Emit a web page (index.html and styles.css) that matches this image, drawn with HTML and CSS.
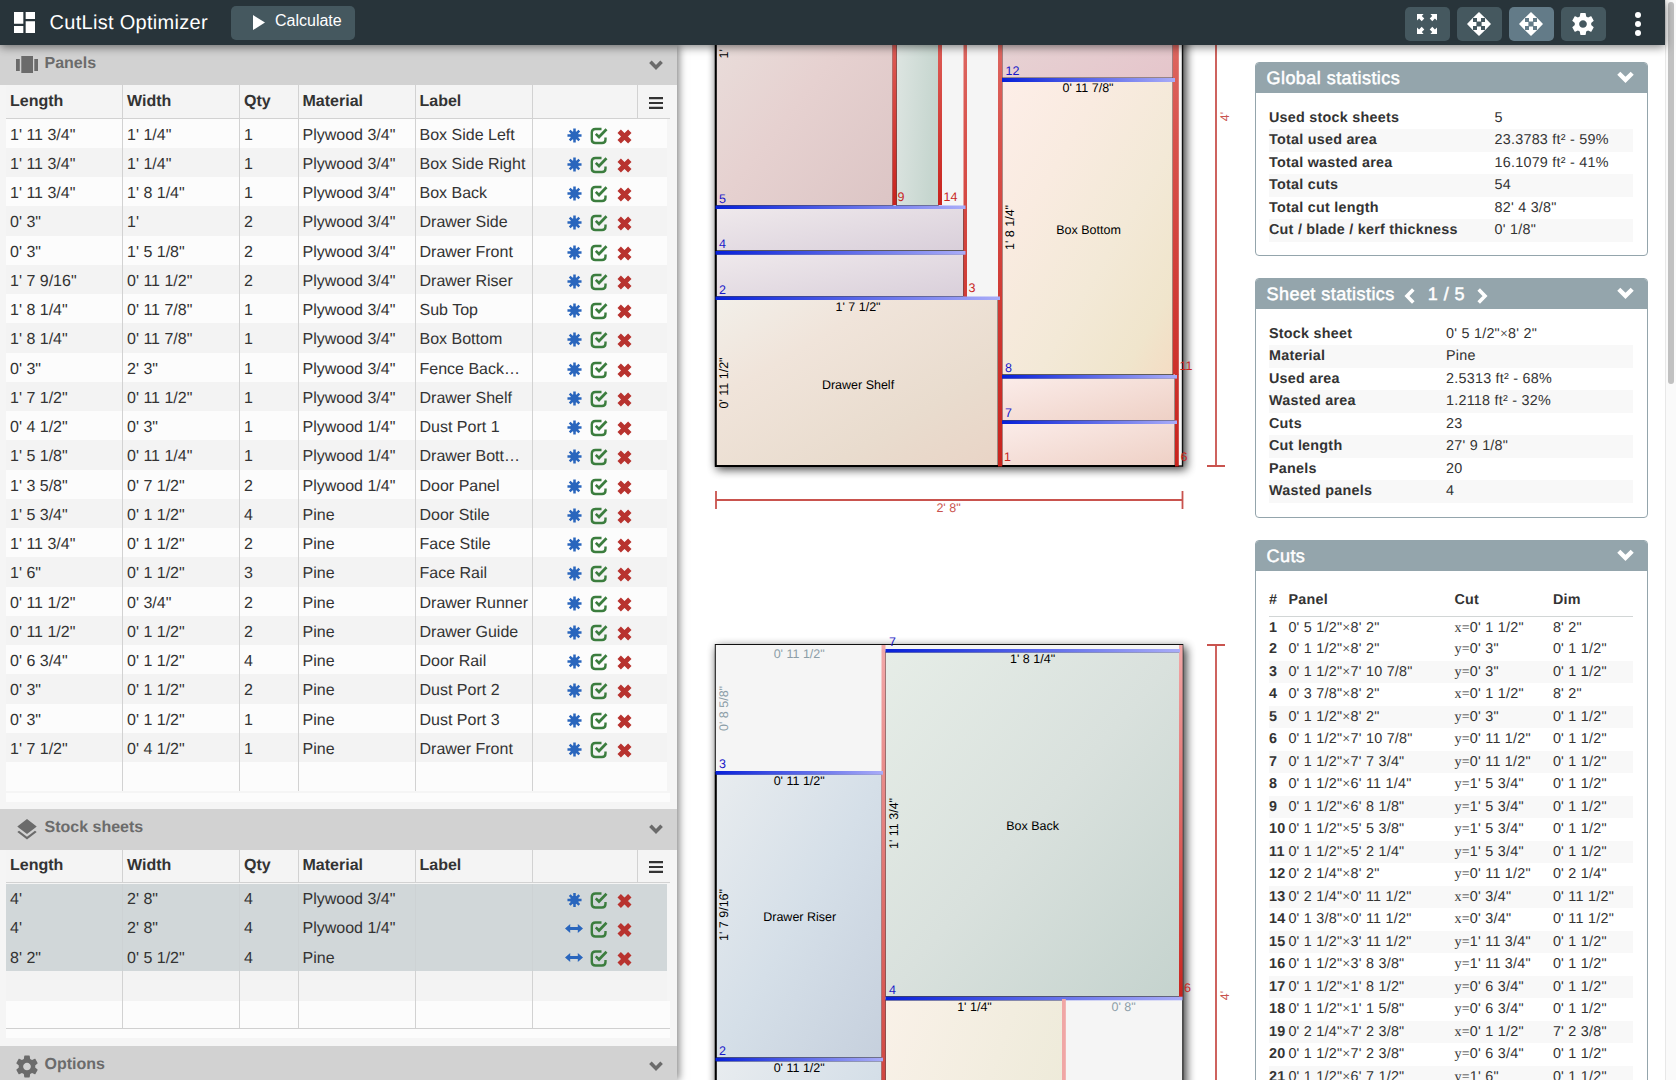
FILE: index.html
```html
<!DOCTYPE html>
<html lang="en">
<head>
<meta charset="utf-8">
<title>CutList Optimizer</title>
<link rel="stylesheet" href="styles.css">
</head>
<body>
<svg class="defs" width="0" height="0">
  <defs>
    <symbol id="star" viewBox="0 0 16 16"><path d="M8 .5v15M.5 8h15M2.9 2.9l10.2 10.2M13.1 2.9L2.9 13.1" stroke="#2a66bd" stroke-width="2.7" fill="none"/><circle cx="8" cy="8" r="4.6" fill="#2a66bd"/></symbol>
    <symbol id="both" viewBox="0 0 18 10"><path d="M0 5L5.200.6V3.500H12.800V.600L18 5L12.800 9.400V6.500H5.200V9.400Z" fill="#2a66bd"/></symbol>
    <symbol id="check" viewBox="0 0 18 18"><path d="M11.500 2H5.500Q1.800 2 1.800 5.500V12.500Q1.800 16 5.500 16H12Q15.500 16 15.500 12.500V10.500" stroke="#3b7d3e" stroke-width="2.400" fill="none"/><path d="M5.800 6.900L9 10L16.500 2.300" stroke="#3b7d3e" stroke-width="2.700" fill="none"/></symbol>
    <symbol id="cross" viewBox="0 0 15 15"><path d="M2.200 2.200L12.800 12.800M12.800 2.200L2.200 12.800" stroke="#b8332f" stroke-width="4.800" fill="none"/></symbol>
    <symbol id="chev" viewBox="0 0 14 10"><path d="M1.400 1.800L7 7.400L12.600 1.800" stroke="currentColor" stroke-width="3.600" fill="none"/></symbol>
    <symbol id="bars" viewBox="0 0 14 12"><path d="M0 1.100H14M0 6H14M0 10.900H14" stroke="#333" stroke-width="2.200"/></symbol>
    <symbol id="gear" viewBox="2 2 20 20"><path fill="currentColor" d="M19.430 12.980c.040-.320.070-.640.070-.980s-.030-.660-.070-.980l2.110-1.650c.190-.150.240-.420.120-.640l-2-3.460c-.120-.220-.390-.300-.610-.220l-2.490 1c-.520-.400-1.080-.730-1.690-.980l-.380-2.650C14.460 2.180 14.250 2 14 2h-4c-.250 0-.460.180-.490.420l-.380 2.650c-.610.250-1.170.590-1.690.980l-2.490-1c-.230-.090-.490 0-.610.220l-2 3.460c-.130.220-.070.490.120.640l2.110 1.650c-.040.320-.070.650-.070.980s.030.660.070.980l-2.110 1.650c-.190.150-.240.420-.120.640l2 3.460c.120.220.390.300.610.220l2.490-1c.520.400 1.080.730 1.690.980l.380 2.650c.030.240.240.420.490.420h4c.250 0 .460-.180.490-.420l.380-2.650c.610-.250 1.170-.590 1.690-.980l2.490 1c.230.090.490 0 .610-.220l2-3.460c.120-.220.070-.490-.120-.640l-2.110-1.650zM12 15.500c-1.930 0-3.500-1.570-3.500-3.500s1.570-3.500 3.500-3.500 3.500 1.570 3.500 3.500-1.570 3.500-3.500 3.500z"/></symbol>
    <symbol id="move" viewBox="0 0 24 24"><path fill="#fff" d="M12 0l6.200 6H14v3.400h-4V6H5.800zM12 24l-6.200-6H10v-3.400h4V18h4.200zM0 12l6-6.200V10h3.400v4H6v4.200zM24 12l-6 6.200V14h-3.400v-4H18V5.800z"/></symbol>
    <symbol id="expand" viewBox="0 0 20 20"><path fill="#fff" d="M0 0h6.600L4.800 1.900 7.300 4.500 4.700 7.200 2.100 4.600 0 6.600zM20 0v6.600L17.900 4.600l-2.600 2.600-2.600-2.700 2.500-2.600L13.400 0zM0 20v-6.600l2.100 2 2.600-2.600 2.600 2.700-2.500 2.600L6.600 20zM20 20h-6.600l1.800-1.900-2.500-2.600 2.600-2.700 2.600 2.600 2.100-2z"/></symbol>
  </defs>
</svg>
<div class="page">
<header class="topbar">
  <svg class="logo" width="21" height="21" viewBox="0 0 18 18"><path fill="#fff" d="M0 10h8V0H0zM0 18h8v-6H0zM10 18h8V8h-8zM10 0v6h8V0z"/></svg>
  <span class="brand">CutList Optimizer</span>
  <button class="calc"><svg width="12" height="15" viewBox="0 0 12 15"><path d="M0 0L12 7.500L0 15Z" fill="#fff"/></svg>Calculate</button>
  <div class="tools">
    <button class="tool"><svg width="20" height="20"><use href="#expand"/></svg></button>
    <button class="tool"><svg width="24" height="24"><use href="#move"/></svg></button>
    <button class="tool active"><svg width="24" height="24"><use href="#move"/></svg></button>
    <button class="tool"><svg width="22" height="22"><use href="#gear"/></svg></button>
    <svg class="dots" width="6" height="24" viewBox="0 0 6 24"><circle cx="3" cy="3" r="3" fill="#fff"/><circle cx="3" cy="12" r="3" fill="#fff"/><circle cx="3" cy="21" r="3" fill="#fff"/></svg>
  </div>
</header>
<div class="main">
<aside class="side">
  <h2 class="bar first"><svg width="22" height="17" viewBox="0 0 22 17"><path fill="#6b6b6b" d="M0 3h3.800v12H0zM5.300 0h11.700v17H5.300zM18.300 3H22v12h-3.700z"/></svg>Panels<svg class="fold" width="14" height="10"><use href="#chev"/></svg></h2>
  <div class="grid">
    <div class="row head"><b>Length</b><b>Width</b><b>Qty</b><b>Material</b><b>Label</b><b></b><b class="menu"><svg width="14" height="12"><use href="#bars"/></svg></b></div>
    <div class="row"><span>1' 11 3/4"</span><span>1' 1/4"</span><span>1</span><span>Plywood 3/4"</span><span>Box Side Left</span><span class="act"><svg class="i1"><use href="#star"/></svg><svg class="i2"><use href="#check"/></svg><svg class="i3"><use href="#cross"/></svg></span></div>
    <div class="row"><span>1' 11 3/4"</span><span>1' 1/4"</span><span>1</span><span>Plywood 3/4"</span><span>Box Side Right</span><span class="act"><svg class="i1"><use href="#star"/></svg><svg class="i2"><use href="#check"/></svg><svg class="i3"><use href="#cross"/></svg></span></div>
    <div class="row"><span>1' 11 3/4"</span><span>1' 8 1/4"</span><span>1</span><span>Plywood 3/4"</span><span>Box Back</span><span class="act"><svg class="i1"><use href="#star"/></svg><svg class="i2"><use href="#check"/></svg><svg class="i3"><use href="#cross"/></svg></span></div>
    <div class="row"><span>0' 3"</span><span>1'</span><span>2</span><span>Plywood 3/4"</span><span>Drawer Side</span><span class="act"><svg class="i1"><use href="#star"/></svg><svg class="i2"><use href="#check"/></svg><svg class="i3"><use href="#cross"/></svg></span></div>
    <div class="row"><span>0' 3"</span><span>1' 5 1/8"</span><span>2</span><span>Plywood 3/4"</span><span>Drawer Front</span><span class="act"><svg class="i1"><use href="#star"/></svg><svg class="i2"><use href="#check"/></svg><svg class="i3"><use href="#cross"/></svg></span></div>
    <div class="row"><span>1' 7 9/16"</span><span>0' 11 1/2"</span><span>2</span><span>Plywood 3/4"</span><span>Drawer Riser</span><span class="act"><svg class="i1"><use href="#star"/></svg><svg class="i2"><use href="#check"/></svg><svg class="i3"><use href="#cross"/></svg></span></div>
    <div class="row"><span>1' 8 1/4"</span><span>0' 11 7/8"</span><span>1</span><span>Plywood 3/4"</span><span>Sub Top</span><span class="act"><svg class="i1"><use href="#star"/></svg><svg class="i2"><use href="#check"/></svg><svg class="i3"><use href="#cross"/></svg></span></div>
    <div class="row"><span>1' 8 1/4"</span><span>0' 11 7/8"</span><span>1</span><span>Plywood 3/4"</span><span>Box Bottom</span><span class="act"><svg class="i1"><use href="#star"/></svg><svg class="i2"><use href="#check"/></svg><svg class="i3"><use href="#cross"/></svg></span></div>
    <div class="row"><span>0' 3"</span><span>2' 3"</span><span>1</span><span>Plywood 3/4"</span><span>Fence Back…</span><span class="act"><svg class="i1"><use href="#star"/></svg><svg class="i2"><use href="#check"/></svg><svg class="i3"><use href="#cross"/></svg></span></div>
    <div class="row"><span>1' 7 1/2"</span><span>0' 11 1/2"</span><span>1</span><span>Plywood 3/4"</span><span>Drawer Shelf</span><span class="act"><svg class="i1"><use href="#star"/></svg><svg class="i2"><use href="#check"/></svg><svg class="i3"><use href="#cross"/></svg></span></div>
    <div class="row"><span>0' 4 1/2"</span><span>0' 3"</span><span>1</span><span>Plywood 1/4"</span><span>Dust Port 1</span><span class="act"><svg class="i1"><use href="#star"/></svg><svg class="i2"><use href="#check"/></svg><svg class="i3"><use href="#cross"/></svg></span></div>
    <div class="row"><span>1' 5 1/8"</span><span>0' 11 1/4"</span><span>1</span><span>Plywood 1/4"</span><span>Drawer Bott…</span><span class="act"><svg class="i1"><use href="#star"/></svg><svg class="i2"><use href="#check"/></svg><svg class="i3"><use href="#cross"/></svg></span></div>
    <div class="row"><span>1' 3 5/8"</span><span>0' 7 1/2"</span><span>2</span><span>Plywood 1/4"</span><span>Door Panel</span><span class="act"><svg class="i1"><use href="#star"/></svg><svg class="i2"><use href="#check"/></svg><svg class="i3"><use href="#cross"/></svg></span></div>
    <div class="row"><span>1' 5 3/4"</span><span>0' 1 1/2"</span><span>4</span><span>Pine</span><span>Door Stile</span><span class="act"><svg class="i1"><use href="#star"/></svg><svg class="i2"><use href="#check"/></svg><svg class="i3"><use href="#cross"/></svg></span></div>
    <div class="row"><span>1' 11 3/4"</span><span>0' 1 1/2"</span><span>2</span><span>Pine</span><span>Face Stile</span><span class="act"><svg class="i1"><use href="#star"/></svg><svg class="i2"><use href="#check"/></svg><svg class="i3"><use href="#cross"/></svg></span></div>
    <div class="row"><span>1' 6"</span><span>0' 1 1/2"</span><span>3</span><span>Pine</span><span>Face Rail</span><span class="act"><svg class="i1"><use href="#star"/></svg><svg class="i2"><use href="#check"/></svg><svg class="i3"><use href="#cross"/></svg></span></div>
    <div class="row"><span>0' 11 1/2"</span><span>0' 3/4"</span><span>2</span><span>Pine</span><span>Drawer Runner</span><span class="act"><svg class="i1"><use href="#star"/></svg><svg class="i2"><use href="#check"/></svg><svg class="i3"><use href="#cross"/></svg></span></div>
    <div class="row"><span>0' 11 1/2"</span><span>0' 1 1/2"</span><span>2</span><span>Pine</span><span>Drawer Guide</span><span class="act"><svg class="i1"><use href="#star"/></svg><svg class="i2"><use href="#check"/></svg><svg class="i3"><use href="#cross"/></svg></span></div>
    <div class="row"><span>0' 6 3/4"</span><span>0' 1 1/2"</span><span>4</span><span>Pine</span><span>Door Rail</span><span class="act"><svg class="i1"><use href="#star"/></svg><svg class="i2"><use href="#check"/></svg><svg class="i3"><use href="#cross"/></svg></span></div>
    <div class="row"><span>0' 3"</span><span>0' 1 1/2"</span><span>2</span><span>Pine</span><span>Dust Port 2</span><span class="act"><svg class="i1"><use href="#star"/></svg><svg class="i2"><use href="#check"/></svg><svg class="i3"><use href="#cross"/></svg></span></div>
    <div class="row"><span>0' 3"</span><span>0' 1 1/2"</span><span>1</span><span>Pine</span><span>Dust Port 3</span><span class="act"><svg class="i1"><use href="#star"/></svg><svg class="i2"><use href="#check"/></svg><svg class="i3"><use href="#cross"/></svg></span></div>
    <div class="row"><span>1' 7 1/2"</span><span>0' 4 1/2"</span><span>1</span><span>Pine</span><span>Drawer Front</span><span class="act"><svg class="i1"><use href="#star"/></svg><svg class="i2"><use href="#check"/></svg><svg class="i3"><use href="#cross"/></svg></span></div>
    <div class="row"><span></span><span></span><span></span><span></span><span></span><span></span></div>
    <div class="foot"></div>
  </div>
  <h2 class="bar"><svg width="20" height="21" viewBox="2.500 2 19 19.500"><path fill="#6b6b6b" d="M11.990 18.540l-7.370-5.730L3 14.070l9 7 9-7-1.630-1.270-7.380 5.740zM12 16l7.360-5.730L21 9l-9-7-9 7 1.630 1.270L12 16z"/></svg>Stock sheets<svg class="fold" width="14" height="10"><use href="#chev"/></svg></h2>
  <div class="grid stock">
    <div class="row head"><b>Length</b><b>Width</b><b>Qty</b><b>Material</b><b>Label</b><b></b><b class="menu"><svg width="14" height="12"><use href="#bars"/></svg></b></div>
    <div class="row sel"><span>4'</span><span>2' 8"</span><span>4</span><span>Plywood 3/4"</span><span></span><span class="act"><svg class="i1"><use href="#star"/></svg><svg class="i2"><use href="#check"/></svg><svg class="i3"><use href="#cross"/></svg></span></div>
    <div class="row sel"><span>4'</span><span>2' 8"</span><span>4</span><span>Plywood 1/4"</span><span></span><span class="act"><svg class="i1 wide"><use href="#both"/></svg><svg class="i2"><use href="#check"/></svg><svg class="i3"><use href="#cross"/></svg></span></div>
    <div class="row sel"><span>8' 2"</span><span>0' 5 1/2"</span><span>4</span><span>Pine</span><span></span><span class="act"><svg class="i1 wide"><use href="#both"/></svg><svg class="i2"><use href="#check"/></svg><svg class="i3"><use href="#cross"/></svg></span></div>
    <div class="row"><span></span><span></span><span></span><span></span><span></span><span></span></div>
    <div class="row last"><span></span><span></span><span></span><span></span><span></span><span></span></div>
    <div class="foot"></div>
  </div>
  <h2 class="bar end"><svg width="22" height="23"><use href="#gear"/></svg>Options<svg class="fold" width="14" height="10"><use href="#chev"/></svg></h2>
</aside>
<section class="board">
<svg class="sheets" width="564" height="1035" viewBox="677 45 564 1035">
  <defs>
    <linearGradient id="bl" x1="0" x2="1" y1="0" y2="0"><stop offset="0" stop-color="#0720d8"/><stop offset="1" stop-color="#a9acf8"/></linearGradient>
    <linearGradient id="r1" gradientUnits="userSpaceOnUse" x1="0" x2="0" y1="0" y2="466"><stop offset="0" stop-color="#e0706a"/><stop offset=".3" stop-color="#d8524c"/><stop offset="1" stop-color="#c8231d"/></linearGradient>
    <linearGradient id="r2" gradientUnits="userSpaceOnUse" x1="0" x2="0" y1="45" y2="205"><stop offset="0" stop-color="#dd5b55"/><stop offset="1" stop-color="#c8231d"/></linearGradient>
    <linearGradient id="r3" gradientUnits="userSpaceOnUse" x1="0" x2="0" y1="645" y2="1130"><stop offset="0" stop-color="#f2a9a9"/><stop offset="1" stop-color="#cc3a34"/></linearGradient>
    <linearGradient id="r4" gradientUnits="userSpaceOnUse" x1="0" x2="0" y1="645" y2="997"><stop offset="0" stop-color="#f2a9a9"/><stop offset="1" stop-color="#c8231d"/></linearGradient>
    <linearGradient id="rose" x1="0" x2="1" y1="0" y2="1"><stop offset="0" stop-color="#eae1de"/><stop offset=".5" stop-color="#e6d1d0"/><stop offset="1" stop-color="#dcc5c5"/></linearGradient>
    <linearGradient id="green" x1="0" x2="1" y1="0" y2=".3"><stop offset="0" stop-color="#dfe6e3"/><stop offset="1" stop-color="#c6d6cf"/></linearGradient>
    <linearGradient id="mauve" x1="0" x2="1" y1="0" y2="1"><stop offset="0" stop-color="#efe9ec"/><stop offset="1" stop-color="#d9cfda"/></linearGradient>
    <linearGradient id="shelf" x1="0" x2="1" y1="0" y2="1"><stop offset="0" stop-color="#f2efe9"/><stop offset=".3" stop-color="#f0e4da"/><stop offset=".7" stop-color="#e9dcce"/><stop offset="1" stop-color="#e9d4c6"/></linearGradient>
    <linearGradient id="pink" x1="0" x2="1" y1="0" y2="1"><stop offset="0" stop-color="#e8d9d8"/><stop offset="1" stop-color="#e5c5cb"/></linearGradient>
    <linearGradient id="sand" x1="0" x2="1" y1="0" y2="1"><stop offset="0" stop-color="#fdeee8"/><stop offset=".3" stop-color="#f9ebe0"/><stop offset=".6" stop-color="#f3e9d7"/><stop offset=".85" stop-color="#f0e5cc"/><stop offset="1" stop-color="#f4dcc3"/></linearGradient>
    <linearGradient id="peach" x1="0" x2="1" y1="0" y2="1"><stop offset="0" stop-color="#fbece9"/><stop offset="1" stop-color="#eed0c5"/></linearGradient>
    <linearGradient id="ice" x1="0" x2="1" y1="0" y2="1"><stop offset="0" stop-color="#e8ecef"/><stop offset=".5" stop-color="#d5dfe8"/><stop offset="1" stop-color="#c6d0dd"/></linearGradient>
    <linearGradient id="sage" x1="0" x2="1" y1="0" y2="1"><stop offset="0" stop-color="#e6ede7"/><stop offset=".5" stop-color="#d9e1dd"/><stop offset="1" stop-color="#c5d3ce"/></linearGradient>
    <linearGradient id="cream" x1="0" x2="1" y1="0" y2=".7"><stop offset="0" stop-color="#f9f1e8"/><stop offset="1" stop-color="#ebe9d6"/></linearGradient>
    <filter id="sh" x="-10%" y="-10%" width="120%" height="120%"><feGaussianBlur stdDeviation="5"/></filter>
  </defs>

  <rect x="716.500" y="-20" width="470" height="489.500" fill="#000" opacity=".75" filter="url(#sh)"/>
  <rect x="715.500" y="-20" width="467" height="486" fill="#f5f5f5" stroke="#111" stroke-width="1.400"/>
  <g stroke="#222" stroke-width=".8">
    <rect x="716" y="-20" width="177" height="225.500" fill="url(#rose)"/>
    <rect x="896.500" y="-20" width="42" height="225.500" fill="url(#green)"/>
    <rect x="716" y="208" width="247.500" height="42.700" fill="url(#mauve)"/>
    <rect x="716" y="254" width="247.500" height="42.500" fill="url(#mauve)"/>
    <rect x="716" y="299" width="282" height="166.500" fill="url(#shelf)"/>
    <rect x="1002" y="-20" width="171" height="98" fill="url(#pink)"/>
    <rect x="1002" y="81" width="171" height="293.700" fill="url(#sand)"/>
    <rect x="1002" y="378" width="173" height="42.500" fill="url(#peach)"/>
    <rect x="1002" y="423" width="173" height="42.500" fill="url(#peach)"/>
  </g>
  <path d="M715.800 45V466H1179" fill="none" stroke="#000" stroke-width="1.800"/>
  <g fill="url(#r1)">
    <rect x="892.500" y="40" width="4" height="165" fill="url(#r2)"/>
    <rect x="938" y="40" width="4" height="165" fill="url(#r2)"/>
    <rect x="963.500" y="40" width="3.500" height="257"/>
    <rect x="998" y="40" width="4.200" height="426.500"/>
    <rect x="1172.800" y="40" width="6" height="334.500"/>
    <rect x="1175" y="374" width="3.800" height="92.500"/>
  </g>
  <g fill="url(#bl)">
    <rect x="1002" y="78" width="173" height="4"/>
    <rect x="715.500" y="205.500" width="250" height="3.500"/>
    <rect x="715.500" y="251" width="250" height="3.700"/>
    <rect x="715.500" y="296.500" width="284.500" height="3.500"/>
    <rect x="1002" y="375" width="175" height="3.600"/>
    <rect x="1002" y="420.500" width="175" height="3.500"/>
  </g>
  <g class="blue"><text x="1005.500" y="75">12</text><text x="719" y="202.700">5</text><text x="719" y="248">4</text><text x="719" y="294">2</text><text x="1005" y="372">8</text><text x="1005" y="417.300">7</text></g>
  <g class="red"><text x="897.500" y="200.700">9</text><text x="943.500" y="200.700">14</text><text x="968.500" y="291.700">3</text><text x="1004" y="461">1</text><text x="1179.500" y="370">11</text><text x="1180.500" y="461">6</text></g>
  <g class="mid">
    <text x="1088" y="92.300">0' 11 7/8"</text><text x="1088.500" y="233.700">Box Bottom</text>
    <text x="858" y="311">1' 7 1/2"</text><text x="858" y="388.500">Drawer Shelf</text>
    <text transform="translate(1014 227.500) rotate(-90)">1' 8 1/4"</text>
    <text transform="translate(728.200 383) rotate(-90)">0' 11 1/2"</text>
    <text transform="translate(728.200 53.800) rotate(-90)">1'</text>
  </g>
  <g class="dim" stroke="#c9534e" stroke-width="1.800">
    <path d="M1216 45V466M1207 466H1225M716 500H1182M716 491V509M1182.500 491V509M1216 645V1080M1207 645H1225" fill="none"/>
  </g>
  <g class="mid scale"><text x="948.500" y="511.700">2' 8"</text><text transform="translate(1228.500 116.500) rotate(-90)">4'</text><text transform="translate(1228.500 995.500) rotate(-90)">4'</text></g>

  <rect x="716.500" y="647" width="470" height="480" fill="#000" opacity=".75" filter="url(#sh)"/>
  <rect x="715.300" y="644.500" width="467.500" height="486" fill="#f5f5f5" stroke="#111" stroke-width="1"/>
  <g stroke="#222" stroke-width=".8">
    <rect x="716" y="774" width="166" height="283.700" fill="url(#ice)"/>
    <rect x="716" y="1061" width="166" height="283" fill="url(#ice)"/>
    <rect x="885.500" y="652" width="294" height="344.500" fill="url(#sage)"/>
    <rect x="885.500" y="1000" width="177" height="340" fill="url(#cream)"/>
  </g>
  <path d="M715.800 772V1080" stroke="#000" stroke-width="1.800"/>
  <rect x="881.500" y="645" width="4" height="440" fill="url(#r3)"/>
  <rect x="1179" y="645" width="3.600" height="352" fill="url(#r4)"/>
  <g fill="url(#bl)">
    <rect x="885.500" y="649" width="294.500" height="3.500"/>
    <rect x="715.500" y="771" width="167.500" height="3.700"/>
    <rect x="885.500" y="996.700" width="297" height="3.600"/>
    <rect x="715.500" y="1057.700" width="167.500" height="3.600"/>
  </g>
  <rect x="1062" y="999" width="3.800" height="90" fill="#f0a6a5"/>
  <g class="blue"><text x="889" y="645.700">7</text><text x="719" y="767.700">3</text><text x="719" y="1054.700">2</text><text x="889" y="993.700">4</text></g>
  <g class="red"><text x="1184" y="991.700">6</text></g>
  <g class="mid">
    <text x="799.200" y="785.300">0' 11 1/2"</text><text x="1032.600" y="663">1' 8 1/4"</text><text x="1032.600" y="829.700">Box Back</text>
    <text x="799.700" y="921">Drawer Riser</text><text x="974.500" y="1011">1' 1/4"</text><text x="799.200" y="1072">0' 11 1/2"</text>
    <text transform="translate(898 823.500) rotate(-90)">1' 11 3/4"</text>
    <text transform="translate(728.200 915) rotate(-90)">1' 7 9/16"</text>
  </g>
  <g class="mid waste"><text x="799.200" y="658">0' 11 1/2"</text><text x="1123.600" y="1011">0' 8"</text><text transform="translate(728.200 708.500) rotate(-90)">0' 8 5/8"</text></g>
</svg>
</section>
<section class="stats">
  <article class="card">
    <h3>Global statistics<svg class="fold" width="17" height="12"><use href="#chev"/></svg></h3>
    <dl class="wide">
      <div><dt>Used stock sheets</dt><dd>5</dd></div>
      <div><dt>Total used area</dt><dd>23.3783 ft² - 59%</dd></div>
      <div><dt>Total wasted area</dt><dd>16.1079 ft² - 41%</dd></div>
      <div><dt>Total cuts</dt><dd>54</dd></div>
      <div><dt>Total cut length</dt><dd>82' 4 3/8"</dd></div>
      <div><dt>Cut / blade / kerf thickness</dt><dd>0' 1/8"</dd></div>
    </dl>
  </article>
  <article class="card second">
    <h3>Sheet statistics<svg class="prev" width="11" height="16" viewBox="0 0 11 16"><path d="M9.300 1.600L3 8L9.300 14.400" stroke="#fff" stroke-width="3.600" fill="none"/></svg><span>1 / 5</span><svg class="next" width="11" height="16" viewBox="0 0 11 16"><path d="M1.700 1.600L8 8L1.700 14.400" stroke="#fff" stroke-width="3.600" fill="none"/></svg><svg class="fold" width="17" height="12"><use href="#chev"/></svg></h3>
    <dl>
      <div><dt>Stock sheet</dt><dd>0' 5 1/2"<i>×</i>8' 2"</dd></div>
      <div><dt>Material</dt><dd>Pine</dd></div>
      <div><dt>Used area</dt><dd>2.5313 ft² - 68%</dd></div>
      <div><dt>Wasted area</dt><dd>1.2118 ft² - 32%</dd></div>
      <div><dt>Cuts</dt><dd>23</dd></div>
      <div><dt>Cut length</dt><dd>27' 9 1/8"</dd></div>
      <div><dt>Panels</dt><dd>20</dd></div>
      <div><dt>Wasted panels</dt><dd>4</dd></div>
    </dl>
  </article>
  <article class="card cuts">
    <h3>Cuts<svg class="fold" width="17" height="12"><use href="#chev"/></svg></h3>
    <div class="cut chead"><b>#</b><b>Panel</b><b>Cut</b><b>Dim</b></div>
    <div class="cut one"><b>1</b><span>0' 5 1/2"<i>×</i>8' 2"</span><span><i>x=</i>0' 1 1/2"</span><span>8' 2"</span></div>
    <div class="cut"><b>2</b><span>0' 1 1/2"<i>×</i>8' 2"</span><span><i>y=</i>0' 3"</span><span>0' 1 1/2"</span></div>
    <div class="cut"><b>3</b><span>0' 1 1/2"<i>×</i>7' 10 7/8"</span><span><i>y=</i>0' 3"</span><span>0' 1 1/2"</span></div>
    <div class="cut"><b>4</b><span>0' 3 7/8"<i>×</i>8' 2"</span><span><i>x=</i>0' 1 1/2"</span><span>8' 2"</span></div>
    <div class="cut"><b>5</b><span>0' 1 1/2"<i>×</i>8' 2"</span><span><i>y=</i>0' 3"</span><span>0' 1 1/2"</span></div>
    <div class="cut"><b>6</b><span>0' 1 1/2"<i>×</i>7' 10 7/8"</span><span><i>y=</i>0' 11 1/2"</span><span>0' 1 1/2"</span></div>
    <div class="cut"><b>7</b><span>0' 1 1/2"<i>×</i>7' 7 3/4"</span><span><i>y=</i>0' 11 1/2"</span><span>0' 1 1/2"</span></div>
    <div class="cut"><b>8</b><span>0' 1 1/2"<i>×</i>6' 11 1/4"</span><span><i>y=</i>1' 5 3/4"</span><span>0' 1 1/2"</span></div>
    <div class="cut"><b>9</b><span>0' 1 1/2"<i>×</i>6' 8 1/8"</span><span><i>y=</i>1' 5 3/4"</span><span>0' 1 1/2"</span></div>
    <div class="cut"><b>10</b><span>0' 1 1/2"<i>×</i>5' 5 3/8"</span><span><i>y=</i>1' 5 3/4"</span><span>0' 1 1/2"</span></div>
    <div class="cut"><b>11</b><span>0' 1 1/2"<i>×</i>5' 2 1/4"</span><span><i>y=</i>1' 5 3/4"</span><span>0' 1 1/2"</span></div>
    <div class="cut"><b>12</b><span>0' 2 1/4"<i>×</i>8' 2"</span><span><i>y=</i>0' 11 1/2"</span><span>0' 2 1/4"</span></div>
    <div class="cut"><b>13</b><span>0' 2 1/4"<i>×</i>0' 11 1/2"</span><span><i>x=</i>0' 3/4"</span><span>0' 11 1/2"</span></div>
    <div class="cut"><b>14</b><span>0' 1 3/8"<i>×</i>0' 11 1/2"</span><span><i>x=</i>0' 3/4"</span><span>0' 11 1/2"</span></div>
    <div class="cut"><b>15</b><span>0' 1 1/2"<i>×</i>3' 11 1/2"</span><span><i>y=</i>1' 11 3/4"</span><span>0' 1 1/2"</span></div>
    <div class="cut"><b>16</b><span>0' 1 1/2"<i>×</i>3' 8 3/8"</span><span><i>y=</i>1' 11 3/4"</span><span>0' 1 1/2"</span></div>
    <div class="cut"><b>17</b><span>0' 1 1/2"<i>×</i>1' 8 1/2"</span><span><i>y=</i>0' 6 3/4"</span><span>0' 1 1/2"</span></div>
    <div class="cut"><b>18</b><span>0' 1 1/2"<i>×</i>1' 1 5/8"</span><span><i>y=</i>0' 6 3/4"</span><span>0' 1 1/2"</span></div>
    <div class="cut"><b>19</b><span>0' 2 1/4"<i>×</i>7' 2 3/8"</span><span><i>x=</i>0' 1 1/2"</span><span>7' 2 3/8"</span></div>
    <div class="cut"><b>20</b><span>0' 1 1/2"<i>×</i>7' 2 3/8"</span><span><i>y=</i>0' 6 3/4"</span><span>0' 1 1/2"</span></div>
    <div class="cut"><b>21</b><span>0' 1 1/2"<i>×</i>6' 7 1/2"</span><span><i>y=</i>1' 6"</span><span>0' 1 1/2"</span></div>
  </article>
</section>
</div>
</div>
<div class="track"><div class="thumb"></div></div>
</body>
</html>
```
FILE: styles.css
```css
* { box-sizing: border-box; }
body {
  margin: 0;
  width: 1676px;
  height: 1080px;
  overflow: hidden;
  display: flex;
  background: #fff;
  color: #333;
  font: 16px/20px "Liberation Sans", Arial, sans-serif;
  text-rendering: geometricPrecision;
}
.defs { position: absolute; }
svg { flex: none; display: block; }
.page { width: 1665px; height: 1080px; display: flex; flex-direction: column; }

.topbar {
  position: relative;
  z-index: 2;
  height: 45px;
  flex: none;
  display: flex;
  align-items: center;
  padding: 0 24px 0 14px;
  background: #28343a;
  color: #fff;
  box-shadow: 0 2px 9px rgba(0, 0, 0, .5);
}
.brand { width: 181.500px; margin-left: 14.500px; font-size: 20px; letter-spacing: .3px; }
button { border: 0; margin: 0; border-radius: 5px; background: #45585f; color: #fff; }
.calc {
  width: 124px;
  height: 34px;
  display: flex;
  align-items: center;
  gap: 10px;
  padding: 0 0 3px 22px;
  font: 16px "Liberation Sans", Arial, sans-serif;
}
.calc svg { margin-top: 3px; }
.tools { margin: 2px 0 0 auto; display: flex; align-items: center; gap: 7px; }
.tool { width: 45px; height: 34px; padding: 0; display: flex; align-items: center; justify-content: center; }
.tool.active { background: #637b88; }
.dots { margin-left: 22.500px; }

.main { flex: 1; min-height: 0; display: flex; }
.side {
  position: relative;
  z-index: 1;
  width: 677px;
  flex: none;
  background: #f5f5f5;
  box-shadow: 2px 0 8px rgba(0, 0, 0, .5);
}
.bar {
  height: 41px;
  margin: 0;
  display: flex;
  align-items: center;
  padding: 0 14.500px 3px 16px;
  background: #d2d2d2;
  color: #6b6b6b;
  font-size: 16px;
  font-weight: bold;
}
.bar > svg:first-child { width: 22px; margin-right: 6.500px; margin-top: 2px; }
.bar.first { height: 40px; padding-bottom: 2px; }
.bar.first > svg:first-child { margin-top: 1px; }
.bar .fold { margin-left: auto; margin-top: 2px; }
.grid { padding-left: 6px; height: 724px; }
.grid.stock { height: 196px; }
.row {
  display: grid;
  grid-template-columns: 117px 117px 58.500px 117px 117px 1fr;
  width: 661px;
  height: 29.250px;
  background: #fcfcfc;
}
.row:nth-child(odd) { background: #f3f3f3; }
.row > * { border-right: 1px solid #d2d2d2; padding: 7px 0 0 4px; white-space: nowrap; overflow: hidden; }
.row > :last-child { border-right: 0; }
.row.head {
  grid-template-columns: 117px 117px 58.500px 117px 117px 105.500px 1fr;
  width: 664px;
  height: 33.500px;
  background: #f4f4f4;
  border-bottom: 1px solid #d2d2d2;
}
.row.head > * { padding-top: 7px; }
.row.head .menu { padding: 12px 0 0 11px; }
.stock .row.head { height: 33px; margin-bottom: .7px; }
.stock .row.head > * { padding-top: 6px; }
.stock .row.head .menu { padding-top: 11px; }
.stock .row > * { padding-top: 6.500px; }
.row.sel, .row.sel:nth-child(odd) { background: #d1d7d9; }
.row.sel > * { border-color: #cdd2d4; }
.row.last { height: 28px; width: 664px; border-bottom: 1px solid #d0d0d0; }
.act { display: flex; align-items: flex-start; }
.row .act { padding: 0 0 0 34.300px; }
.i1 { width: 15px; height: 15px; margin-top: 9px; }
.i1.wide { width: 18px; height: 10px; margin: 11px -1px 0 -2px; }
.i2 { width: 18px; height: 18px; margin: 8px 0 0 8.500px; }
.i3 { width: 15px; height: 15px; margin: 10px 0 0 8.500px; }
.stock .act svg { transform: translateY(-.5px); }
.foot { width: 664px; height: 9px; margin-top: 2px; background: #fcfcfc; }
.stock .foot { margin-top: 0; }

.board { width: 564px; flex: none; }
.sheets text { font-size: 12.500px; }
.blue text { fill: #1818c8; }
.red text { fill: #c8261f; }
.mid text { text-anchor: middle; fill: #000; }
.scale text { fill: #c9534e; }
.waste text { fill: #8c9ea8; }

.stats { flex: 1; padding: 17px 17.500px 0 13.500px; letter-spacing: .25px; font-size: 14.350px; overflow: hidden; }
.card { height: 194px; margin-bottom: 22px; border: 1px solid #94a5ac; border-radius: 4px; overflow: hidden; }
.card.second { height: 240px; }
.card.cuts { height: 900px; }
.card h3 {
  height: 30px;
  margin: 0;
  display: flex;
  align-items: center;
  padding: 0 13px 0 11px;
  background: #94a5ac;
  color: #fff;
  font-size: 18px;
  letter-spacing: .45px;
  font-weight: normal;
  -webkit-text-stroke: .5px #fff;
}
.card .fold { margin-left: auto; margin-top: -3px; }
.prev { margin: 3px 13px 0 9px; }
.next { margin: 3px 0 0 12px; }
dl { margin: 13.500px 14px 0 13.500px; }
dl div { display: flex; height: 22.500px; }
dl div:nth-child(even) { background: #f8f8f8; }
dt { width: 177px; font-weight: bold; }
dl.wide dt { width: 225.500px; }
dd { margin: 0; }
dt, dd { line-height: 22px; white-space: nowrap; }
.card i { font: 14px "Liberation Serif", "Times New Roman", serif; }
.cut {
  display: grid;
  grid-template-columns: 19.400px 166px 98.500px 1fr;
  height: 22.500px;
  margin: 0 14px 0 13.500px;
  line-height: 22px;
  white-space: nowrap;
}
.cut:nth-child(odd) { background: #f8f8f8; }
.cut.one { background: none; height: 21.500px; }
.cut.chead { height: 45.500px; padding-top: 18px; background: none; border-bottom: 1.500px solid #d2d6d6; }
.cut > * { height: 20px; }

.track { width: 11px; height: 1080px; background: #fafafa; border-left: 1px solid #e8e8e8; padding: 2px 0 0 2px; }
.thumb { width: 6px; height: 382px; border-radius: 3px; background: #c1c1c1; }
```
